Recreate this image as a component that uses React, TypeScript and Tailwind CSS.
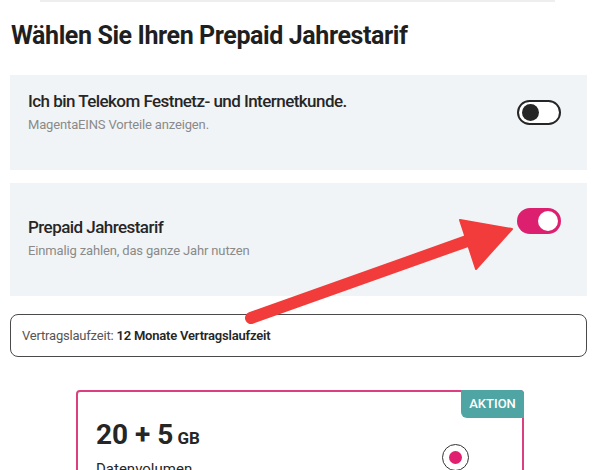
import React from "react";

function Toggle({ on }: { on: boolean }) {
  if (on) {
    return (
      <div className="flex h-[26px] w-[44px] shrink-0 items-center justify-end rounded-full bg-[#dc1f6f] pr-[3px]">
        <div className="h-[20px] w-[20px] rounded-full bg-white" />
      </div>
    );
  }
  return (
    <div className="flex h-[25px] w-[44px] shrink-0 items-center rounded-full border-2 border-[#262626] bg-white pl-[3px]">
      <div className="h-[17px] w-[17px] rounded-full bg-[#262626]" />
    </div>
  );
}

export default function App() {
  return (
    <div className="relative h-[470px] w-[600px] overflow-hidden bg-white font-['Roboto',sans-serif] text-[#262626]">
      <div className="ml-[40px] h-[2px] w-[515px] bg-[#eeeeee]" />
      <div className="px-[10px]">
        <h1 className="ml-[1px] mt-[20px] h-[28px] text-[25px] font-bold leading-[28px] tracking-[-0.4px] text-[#1f1f1f]">
          Wählen Sie Ihren Prepaid Jahrestarif
        </h1>

        <div className="mt-[25px] flex h-[95px] w-[577px] items-start justify-between bg-[#f1f4f6] pl-[18px] pr-[26px]">
          <div className="pt-[15px]">
            <div className="text-[17px] font-medium leading-[22px] tracking-[-0.55px]">
              Ich bin Telekom Festnetz- und Internetkunde.
            </div>
            <div className="mt-[4px] text-[13px] leading-[18px] tracking-[-0.15px] text-[#8a8a8a]">
              MagentaEINS Vorteile anzeigen.
            </div>
          </div>
          <div className="pt-[25px]">
            <Toggle on={false} />
          </div>
        </div>

        <div className="mt-[13px] flex h-[113px] w-[577px] items-start justify-between bg-[#f1f4f6] pl-[18px] pr-[26px]">
          <div className="pt-[33px]">
            <div className="text-[17px] font-medium leading-[22px] tracking-[-0.55px]">
              Prepaid Jahrestarif
            </div>
            <div className="mt-[4px] text-[13px] leading-[18px] tracking-[-0.15px] text-[#8a8a8a]">
              Einmalig zahlen, das ganze Jahr nutzen
            </div>
          </div>
          <div className="pt-[25px]">
            <Toggle on={true} />
          </div>
        </div>

        <div className="mt-[18px] flex h-[43px] w-[577px] items-center rounded-[8px] border border-[#4a4a4a] px-[11px] text-[13px] leading-[18px] tracking-[-0.2px]">
          <span className="text-[#555555]">Vertragslaufzeit:&nbsp;</span>
          <span className="font-semibold text-[#262626]">12 Monate Vertragslaufzeit</span>
        </div>
      </div>

      <div className="relative mx-auto mt-[33px] h-[120px] w-[448px] rounded-[4px] border-2 border-[#dc3f7d] pl-[18px] pt-[26px]">
        <div className="absolute right-[-2px] top-[-2px] flex h-[28px] w-[63px] items-center justify-center rounded-bl-[6px] rounded-tr-[4px] bg-[#4ea5a4] text-[13px] font-medium text-white">
          AKTION
        </div>
        <div className="flex items-baseline font-bold leading-[34px]">
          <span className="text-[28px]">20 + 5</span>
          <span className="ml-[4px] text-[17px]">GB</span>
        </div>
        <div className="mt-[4px] text-[15px] leading-[20px]">Datenvolumen</div>
        <div className="absolute left-[364px] top-[52px] flex h-[27px] w-[27px] items-center justify-center rounded-full border-[1.5px] border-[#333333] bg-white">
          <div className="h-[13px] w-[13px] rounded-full bg-[#e0216f]" />
        </div>
      </div>

      <svg className="pointer-events-none absolute left-0 top-0" width="600" height="470" viewBox="0 0 600 470">
        <line x1="251" y1="318" x2="470" y2="240" stroke="#f23b3b" strokeWidth="12" strokeLinecap="round" />
        <polygon points="460,220 512,229 476,269" fill="#f23b3b" strokeLinejoin="round" stroke="#f23b3b" strokeWidth="2" />
      </svg>
    </div>
  );
}
